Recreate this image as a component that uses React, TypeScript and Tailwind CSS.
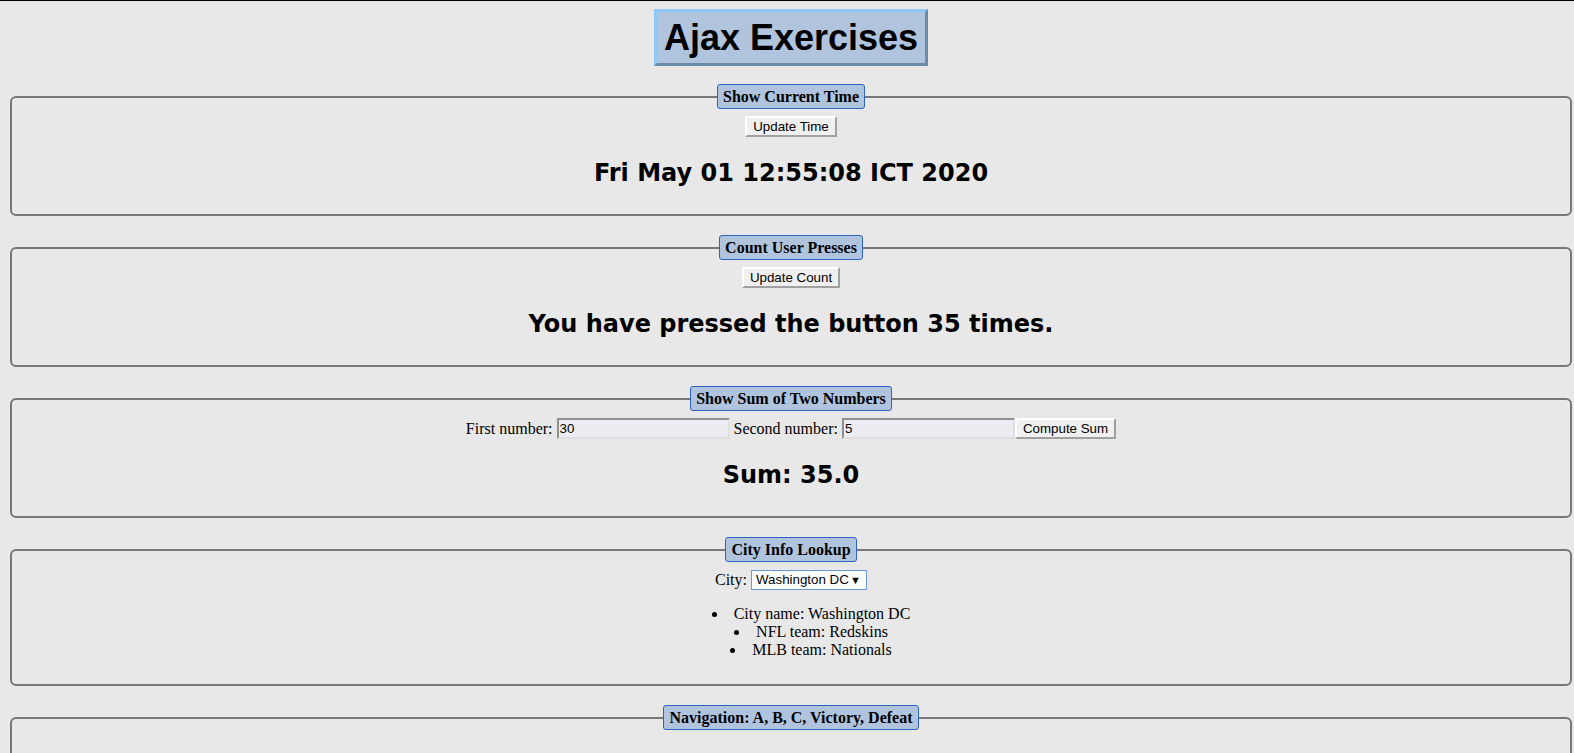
const serif = "font-['Liberation_Serif',serif]";
const sans = "font-['Liberation_Sans',Arial,sans-serif]";

function Legend({ children }: { children: React.ReactNode }) {
  return (
    <legend
      className={`mx-auto rounded-[3px] border border-[#2e62c2] bg-[#b0c4de] px-[5px] py-[3px] text-[16px] leading-[17px] font-bold text-black ${serif}`}
    >
      {children}
    </legend>
  );
}

function Btn({ label }: { label: string }) {
  return (
    <button
      className={`flex h-[21px] items-center border-2 border-t-white border-l-white border-r-[#a0a0a0] border-b-[#a0a0a0] bg-[#f0f0f0] px-[6px] text-[13.33px] leading-none text-black ${sans}`}
    >
      {label}
    </button>
  );
}

function NumberInput({ value }: { value: string }) {
  return (
    <input
      defaultValue={value}
      className={`h-[21px] w-[173px] border-2 border-t-[#8f8f8f] border-l-[#8f8f8f] border-r-[#dedede] border-b-[#dedede] bg-[#ececf2] px-[1px] text-[13.33px] text-black outline-none ${sans}`}
    />
  );
}

const box =
  "ml-[10px] mr-[2px] mb-[19px] rounded-[6px] border-2 border-[#777777] px-3 pb-[9px] pt-[7px] text-center";
const big = "mt-[22px] mb-[18px] text-[24px] leading-[28px] font-bold font-['DejaVu_Sans',Verdana,sans-serif]";

export default function App() {
  return (
    <div className="min-h-screen border-t border-black bg-[#e8e8e8] text-black">
      <div className="mt-2 mr-[2px] mb-[18px] ml-[10px] text-center">
        <h1
          className={`inline-block border-[3px] border-t-[#8fc8f7] border-l-[#8fc8f7] border-r-[#6a8aaa] border-b-[#6a8aaa] bg-[#b0c4de] px-[7px] py-[5px] text-[36px] leading-[41px] font-bold ${sans}`}
        >
          Ajax Exercises
        </h1>
      </div>

      <fieldset className={box}>
        <Legend>Show Current Time</Legend>
        <div className="flex justify-center">
          <Btn label="Update Time" />
        </div>
        <h2 className={big}>Fri May 01 12:55:08 ICT 2020</h2>
      </fieldset>

      <fieldset className={box}>
        <Legend>Count User Presses</Legend>
        <div className="flex justify-center">
          <Btn label="Update Count" />
        </div>
        <h2 className={big}>You have pressed the button 35 times.</h2>
      </fieldset>

      <fieldset className={box}>
        <Legend>Show Sum of Two Numbers</Legend>
        <div className={`flex h-[21px] items-center justify-center text-[16px] ${serif}`}>
          <span className="mr-[4px]">First number:</span>
          <NumberInput value="30" />
          <span className="mr-[4px] ml-[4px]">Second number:</span>
          <NumberInput value="5" />
          <Btn label="Compute Sum" />
        </div>
        <h2 className={big}>Sum: 35.0</h2>
      </fieldset>

      <fieldset className={box}>
        <Legend>City Info Lookup</Legend>
        <div className={`flex h-[22px] items-center justify-center text-[16px] ${serif}`}>
          <span className="mr-[4px]">City:</span>
          <div
            className={`flex h-[20px] w-[116px] items-center justify-between border border-[#6b98d8] bg-white pr-[5px] pl-[4px] text-[13.33px] ${sans}`}
          >
            <span>Washington DC</span>
            <span className="text-[11px]">▼</span>
          </div>
        </div>
        <ul className={`mt-[14px] mb-[16px] list-inside list-disc pl-10 text-[16px] leading-[18px] ${serif}`}>
          <li>City name: Washington DC</li>
          <li>NFL team: Redskins</li>
          <li>MLB team: Nationals</li>
        </ul>
      </fieldset>

      <fieldset className={`${box} h-[140px]`}>
        <Legend>Navigation: A, B, C, Victory, Defeat</Legend>
      </fieldset>
    </div>
  );
}
